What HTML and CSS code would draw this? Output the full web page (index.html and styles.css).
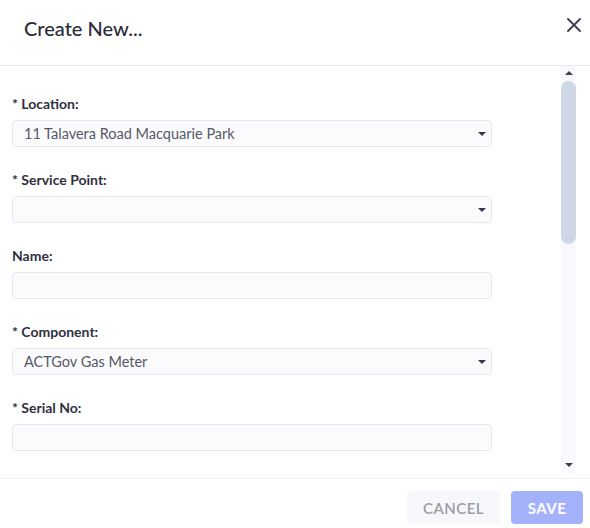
FILE: index.html
```html
<!DOCTYPE html>
<html>
<head>
<meta charset="utf-8">
<link rel="stylesheet" href="styles.css">
</head>
<body>
<div class="modal">
  <div class="header">
    <div class="title">Create New...</div>
    <svg class="close" width="14" height="14" viewBox="0 0 14 14"><path d="M1 1L13 13M13 1L1 13" stroke="#3a3d4e" stroke-width="1.8" stroke-linecap="round"/></svg>
  </div>
  <div class="body">
    <div class="content">
      <div class="field">
        <div class="label">* Location:</div>
        <div class="input select">11 Talavera Road Macquarie Park<span class="caret"></span></div>
      </div>
      <div class="field">
        <div class="label">* Service Point:</div>
        <div class="input select"><span class="caret"></span></div>
      </div>
      <div class="field">
        <div class="label">Name:</div>
        <div class="input"></div>
      </div>
      <div class="field">
        <div class="label">* Component:</div>
        <div class="input select">ACTGov Gas Meter<span class="caret"></span></div>
      </div>
      <div class="field">
        <div class="label">* Serial No:</div>
        <div class="input"></div>
      </div>
    </div>
    <div class="scrollbar">
      <span class="arrow up"></span>
      <div class="thumb"></div>
      <div class="spacer"></div>
      <span class="arrow down"></span>
    </div>
  </div>
  <div class="footer">
    <button class="btn cancel">CANCEL</button>
    <button class="btn save">SAVE</button>
  </div>
</div>
</body>
</html>
```
FILE: styles.css
```css
html, body { margin: 0; padding: 0; background: #fff; }
body { font-family: "Lato", "Open Sans", sans-serif; color: #2c2e3b; }
.modal { width: 590px; height: 528px; display: flex; flex-direction: column; overflow: hidden; }
.header { height: 66px; box-sizing: border-box; border-bottom: 1px solid #e9e9f2; display: flex; justify-content: space-between; align-items: flex-start; padding: 15px 9px 0 24px; }
.title { font-size: 20px; font-weight: 500; line-height: 26px; color: #2a2c3a; }
.close { margin-top: 3px; }
.body { height: 412px; display: flex; flex-direction: row; overflow: hidden; }
.content { width: 480px; margin-left: 12px; padding-top: 28px; }
.field { display: flex; flex-direction: column; margin-bottom: 23px; }
.label { font-size: 14px; font-weight: 700; line-height: 20px; color: #2f3140; margin-bottom: 6px; }
.input { height: 27px; box-sizing: border-box; border: 1px solid #e6e8f1; background: #fbfbfe; border-radius: 4px; padding-left: 11px; font-size: 14.5px; line-height: 25px; color: #565866; display: flex; align-items: center; position: relative; }
.caret { position: absolute; right: 5px; top: 11px; width: 0; height: 0; border-left: 4px solid transparent; border-right: 4px solid transparent; border-top: 4px solid #33364a; }
.scrollbar { width: 15px; margin-left: 69px; height: 407px; background: #f8f8fd; display: flex; flex-direction: column; align-items: center; }
.arrow { width: 0; height: 0; border-left: 4px solid transparent; border-right: 4px solid transparent; }
.arrow.up { border-bottom: 4px solid #3a3d4e; margin-top: 5px; }
.arrow.down { border-top: 4px solid #3a3d4e; margin-bottom: 6px; }
.thumb { width: 15px; height: 163px; background: #cfd6e6; border-radius: 8px; margin-top: 6px; }
.spacer { flex: 1; }
.footer { border-top: 1px solid #f1f1f6; height: 50px; box-sizing: border-box; display: flex; justify-content: flex-end; align-items: flex-start; padding: 12px 7px 0 0; gap: 11px; }
.btn { font-family: "Lato", "Open Sans", sans-serif; height: 33px; border: none; border-radius: 4px; font-size: 15px; letter-spacing: 0.5px; padding: 0; cursor: pointer; }
.cancel { width: 93px; background: #f8f8fc; color: #9a9ca6; font-weight: 600; }
.save { width: 72px; background: #a4b2fc; color: #fff; font-weight: 700; }
```
